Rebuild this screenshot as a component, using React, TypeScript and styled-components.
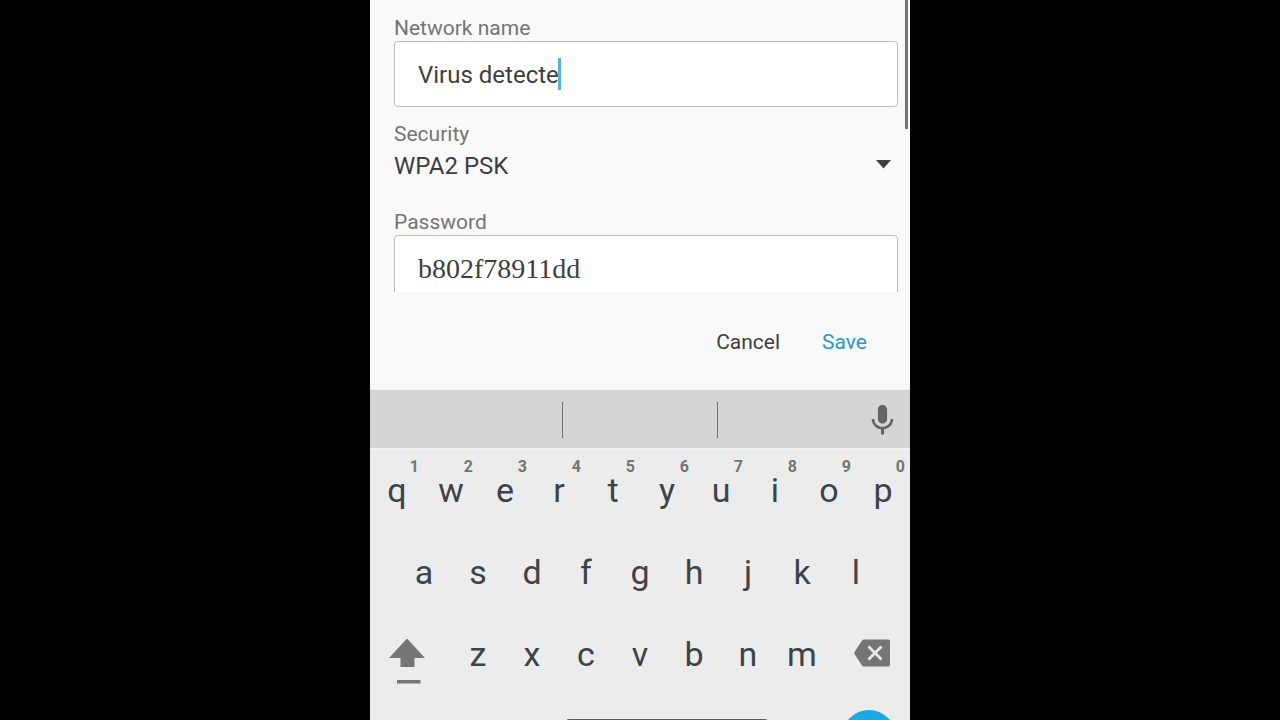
import React, { useState } from "react";
import styled, { createGlobalStyle } from "styled-components";

const GlobalStyle = createGlobalStyle`
  *, *::before, *::after { box-sizing: border-box; }
  body {
    margin: 0;
    background: #000;
    font-family: Roboto, "Liberation Sans", sans-serif;
  }
  button, input, select { font: inherit; color: inherit; }
`;

const Stage = styled.div`
  display: flex;
  justify-content: center;
  height: 100vh;
  overflow: hidden;
`;

const Phone = styled.main`
  display: flex;
  flex-direction: column;
  width: 100%;
  max-width: 540px;
  background: #f9f9f9;
  overflow: hidden;
`;

const Dialog = styled.form`
  flex: none;
  border-bottom: 1px solid #f2f2f2;
  color: #3e3e3e;
`;

const FormScroll = styled.div`
  position: relative;
  max-height: 292px;
  padding: 15px 12px 0 24px;
  overflow: hidden;
`;

const ScrollThumb = styled.span`
  position: absolute;
  top: 0;
  right: 2px;
  width: 3px;
  height: 129px;
  background: #757577;
`;

const Field = styled.div<{ $gap?: number }>`
  display: flex;
  flex-direction: column;
  margin-bottom: ${(p) => p.$gap ?? 0}px;
`;

const Label = styled.label`
  font-size: 21px;
  line-height: 26px;
  color: #757575;
`;

const TextBox = styled.div`
  display: flex;
  align-items: center;
  height: 66px;
  padding: 0 23px;
  background: #fff;
  border: 1px solid #bdbdbd;
  border-radius: 4px;
`;

const TextInput = styled.input<{ $serif?: boolean; $fit?: boolean }>`
  flex: ${(p) => (p.$fit ? "none" : "1")};
  field-sizing: ${(p) => (p.$fit ? "content" : "fixed")};
  min-width: 0;
  padding: 2px 0 0;
  border: 0;
  outline: 0;
  background: transparent;
  font-family: ${(p) => (p.$serif ? '"Liberation Serif", serif' : "inherit")};
  font-size: ${(p) => (p.$serif ? 28 : 24)}px;
  line-height: 32px;
`;

const Caret = styled.span`
  width: 3px;
  height: 32px;
  margin-left: -1px;
  background: #55b4d6;
`;

const SelectBox = styled.div`
  position: relative;
`;

const Select = styled.select`
  display: block;
  width: 100%;
  height: 38px;
  padding: 0;
  border: 0;
  outline: 0;
  appearance: none;
  background: transparent;
  font-size: 24px;
`;

const SelectArrow = styled.svg`
  position: absolute;
  top: 13px;
  right: 7px;
  pointer-events: none;
`;

const Actions = styled.div`
  display: flex;
  justify-content: flex-end;
  align-items: center;
  gap: 42px;
  height: 97px;
  padding: 2px 43px 0 0;
`;

const TextButton = styled.button<{ $primary?: boolean }>`
  padding: 0;
  border: 0;
  background: none;
  font-size: 21px;
  line-height: 26px;
  color: ${(p) => (p.$primary ? "#3097c5" : "#3e3e3e")};
`;

const Suggestions = styled.div`
  display: grid;
  grid-template-columns: 193fr 155fr 192fr;
  align-items: center;
  flex: none;
  height: 58px;
  padding-top: 2px;
  background: #d5d5d5;
`;

const Suggestion = styled.div`
  height: 36px;
  border-right: 1px solid #6c6c6c;
`;

const VoiceSlot = styled.div`
  display: flex;
  justify-content: flex-end;
  padding-right: 9px;
`;

const IconButton = styled.button`
  display: flex;
  padding: 0;
  border: 0;
  background: none;
  color: #616564;
`;

const Keyboard = styled.section`
  flex: none;
  background: #ececec;
  box-shadow: inset 0 2px #f2f2f2;
`;

const Row = styled.div`
  display: grid;
  grid-template-columns: repeat(20, 1fr);
  height: 82px;
`;

const Key = styled.button<{ $start?: number; $span?: number }>`
  position: relative;
  display: flex;
  align-items: center;
  justify-content: center;
  grid-column: ${(p) => p.$start ?? "auto"} / span ${(p) => p.$span ?? 2};
  min-width: 0;
  padding: 2px 0 0;
  border: 0;
  background: none;
  font-size: 34px;
  line-height: 40px;
  color: #3d4447;
`;

const ShiftKey = styled(Key)`
  padding: 0 8px 0 0;
  color: #757575;
`;

const DeleteKey = styled(Key)`
  padding: 0 0 0 4px;
  color: #757575;
`;

const Hint = styled.span`
  position: absolute;
  top: 9px;
  right: 5px;
  font-size: 16px;
  font-weight: 700;
  line-height: 20px;
  color: #757575;
`;

const SpaceBar = styled.span`
  width: 100%;
  height: 34px;
  margin: 0 7px;
  border-radius: 3px;
  background: #5c5c5c;
`;

const EnterDisc = styled.span`
  width: 54px;
  height: 54px;
  margin: 2px 2px 0 0;
  border-radius: 50%;
  background: #1ca8e0;
`;

const numberRow = "qwertyuiop".split("");
const homeRow = "asdfghjkl".split("");
const bottomRow = "zxcvbnm".split("");

export default function App() {
  const [name, setName] = useState("Virus detecte");
  const [password, setPassword] = useState("b802f78911dd");

  return (
    <Stage>
      <GlobalStyle />
      <Phone>
        <Dialog onSubmit={(e) => e.preventDefault()}>
          <FormScroll>
            <Field $gap={14}>
              <Label htmlFor="ssid">Network name</Label>
              <TextBox>
                <TextInput
                  id="ssid"
                  type="text"
                  $fit
                  spellCheck={false}
                  value={name}
                  onChange={(e) => setName(e.target.value)}
                />
                <Caret />
              </TextBox>
            </Field>
            <Field $gap={24}>
              <Label htmlFor="security">Security</Label>
              <SelectBox>
                <Select id="security" defaultValue="wpa2">
                  <option value="wpa2">WPA2 PSK</option>
                </Select>
                <SelectArrow width="15" height="9" viewBox="0 0 15 9" aria-hidden="true">
                  <path d="M0 0h15L7.500 8.500z" fill="#414141" />
                </SelectArrow>
              </SelectBox>
            </Field>
            <Field>
              <Label htmlFor="password">Password</Label>
              <TextBox>
                <TextInput
                  id="password"
                  type="text"
                  $serif
                  spellCheck={false}
                  value={password}
                  onChange={(e) => setPassword(e.target.value)}
                />
              </TextBox>
            </Field>
            <ScrollThumb />
          </FormScroll>
          <Actions>
            <TextButton type="button">Cancel</TextButton>
            <TextButton type="submit" $primary>
              Save
            </TextButton>
          </Actions>
        </Dialog>

        <Suggestions>
          <Suggestion />
          <Suggestion />
          <VoiceSlot>
            <IconButton type="button" aria-label="Voice input">
              <svg width="37" height="37" viewBox="0 0 24 24" fill="currentColor">
                <path d="M12 14c1.660 0 3-1.340 3-3V5c0-1.660-1.340-3-3-3S9 3.340 9 5v6c0 1.660 1.340 3 3 3zm5.300-3c0 3-2.540 5.100-5.300 5.100S6.700 14 6.700 11H5c0 3.410 2.720 6.230 6 6.720V21h2v-3.280c3.280-.480 6-3.300 6-6.720h-1.700z" />
              </svg>
            </IconButton>
          </VoiceSlot>
        </Suggestions>

        <Keyboard aria-label="Keyboard">
          <Row>
            {numberRow.map((k, i) => (
              <Key key={k} type="button">
                {k}
                <Hint>{(i + 1) % 10}</Hint>
              </Key>
            ))}
          </Row>
          <Row>
            {homeRow.map((k, i) => (
              <Key key={k} type="button" $start={2 + i * 2}>
                {k}
              </Key>
            ))}
          </Row>
          <Row>
            <ShiftKey type="button" $span={3} aria-label="Shift">
              <svg width="36" height="62" viewBox="0 0 36 62" fill="currentColor">
                <path d="M18 16.500L36 36H25.500V45H11.500V36H0z" />
                <path d="M8 58h23.500v3.500H8z" />
              </svg>
            </ShiftKey>
            {bottomRow.map((k) => (
              <Key key={k} type="button">
                {k}
              </Key>
            ))}
            <DeleteKey type="button" $span={3} aria-label="Delete">
              <svg width="36" height="28" viewBox="0 0 36 28">
                <path
                  d="M10 .5H34.500Q36 .5 36 2V26Q36 27.500 34.500 27.500H10Q8.500 27.500 7.800 26.300L.5 15Q0 14 .5 13L7.800 1.700Q8.500 .5 10 .5z"
                  fill="currentColor"
                />
                <path d="M14.500 7.500L27.500 20.500M27.500 7.500L14.500 20.500" stroke="#ececec" strokeWidth="2.800" />
              </svg>
            </DeleteKey>
          </Row>
          <Row>
            <Key type="button" $start={8} $span={8} aria-label="Space">
              <SpaceBar />
            </Key>
            <Key type="button" $start={18} $span={3} aria-label="Enter">
              <EnterDisc />
            </Key>
          </Row>
        </Keyboard>
      </Phone>
    </Stage>
  );
}
